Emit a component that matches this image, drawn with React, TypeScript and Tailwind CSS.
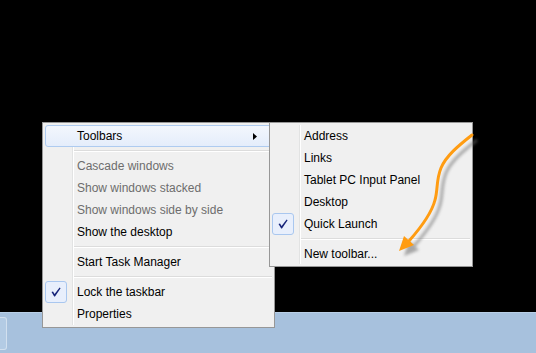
import type { ReactNode } from "react";

type Item =
  | { kind: "item"; label: string; disabled?: boolean; checked?: boolean; hot?: boolean; submenu?: boolean }
  | { kind: "sep" };

const mainItems: Item[] = [
  { kind: "item", label: "Toolbars", hot: true, submenu: true },
  { kind: "sep" },
  { kind: "item", label: "Cascade windows", disabled: true },
  { kind: "item", label: "Show windows stacked", disabled: true },
  { kind: "item", label: "Show windows side by side", disabled: true },
  { kind: "item", label: "Show the desktop" },
  { kind: "sep" },
  { kind: "item", label: "Start Task Manager" },
  { kind: "sep" },
  { kind: "item", label: "Lock the taskbar", checked: true },
  { kind: "item", label: "Properties" },
];

const toolbarItems: Item[] = [
  { kind: "item", label: "Address" },
  { kind: "item", label: "Links" },
  { kind: "item", label: "Tablet PC Input Panel" },
  { kind: "item", label: "Desktop" },
  { kind: "item", label: "Quick Launch", checked: true },
  { kind: "sep" },
  { kind: "item", label: "New toolbar..." },
];

function Check() {
  return (
    <div className="absolute left-0 top-0 flex h-[22px] w-[22px] items-center justify-center rounded-[3px] border border-[#a9c7ef] bg-[#e8effc]">
      <svg width="10" height="10" viewBox="0 0 10 10">
        <path d="M0.5 5 L2 4.5 L3.6 7 L8.6 0.6 L9.6 1.2 L4 9.4 L3.2 9.4 Z" fill="#16247a" />
      </svg>
    </div>
  );
}

function MenuRow({ item }: { item: Item }) {
  if (item.kind === "sep") {
    return (
      <div className="flex h-[8px] flex-col justify-center pl-[29px]">
        <div className="h-px bg-[#dcdcdc]" />
        <div className="h-px bg-white" />
      </div>
    );
  }
  return (
    <div
      className={`relative flex h-[22px] items-center pl-[32px] pr-[10px] ${
        item.hot ? "rounded-[3px] border border-[#aecbf0] bg-gradient-to-b from-[#f3f7fd] to-[#e4edfb]" : ""
      }`}
    >
      {item.checked && <Check />}
      <span className={`${item.hot ? "-ml-px" : ""} ${item.disabled ? "text-[#6d6d6d]" : "text-black"}`}>{item.label}</span>
      {item.submenu && (
        <svg className="ml-auto mr-[4px]" width="4" height="7" viewBox="0 0 4 7">
          <path d="M0 0 L4 3.5 L0 7 Z" fill="#000" />
        </svg>
      )}
    </div>
  );
}

function Menu({ items, className, children }: { items: Item[]; className: string; children?: ReactNode }) {
  return (
    <div className={`absolute border border-[#979797] bg-[#f0f0f0] p-[2px] ${className}`}>
      <div className="absolute bottom-[2px] left-[29px] top-[2px] flex">
        <div className="w-px bg-[#e2e3e3]" />
        <div className="w-px bg-white" />
      </div>
      <div className="relative flex flex-col">
        {items.map((it, i) => (
          <MenuRow key={i} item={it} />
        ))}
      </div>
      {children}
    </div>
  );
}

export default function App() {
  return (
    <div
      className="relative flex h-[353px] w-[536px] flex-col overflow-hidden bg-black text-[12px] leading-none"
      style={{ fontFamily: '"Segoe UI", "Liberation Sans", Arial, sans-serif' }}
    >
      <div className="mt-auto flex h-[41px] items-center border-t border-[#b9cfe6] bg-[#a7c1dd]">
        <div className="h-[33px] w-[7px] rounded-r-[3px] border border-l-0 border-[#d2e0ef] bg-[#b3cbe4]" />
      </div>

      <Menu items={mainItems} className="left-[42px] top-[122px] w-[233px]" />
      <Menu items={toolbarItems} className="left-[269px] top-[122px] w-[204px] pb-px" />

      <svg className="pointer-events-none absolute left-0 top-0" width="536" height="353" viewBox="0 0 536 353">
        <defs>
          <filter id="blur" x="-20%" y="-20%" width="140%" height="140%">
            <feGaussianBlur stdDeviation="1.6" />
          </filter>
        </defs>
        <g transform="translate(5 5)" filter="url(#blur)" opacity="0.55">
          <path
            d="M472 135 C458 146 446 156 441 168 C436 180 438 190 435 200 C432 212 424 224 409 241"
            stroke="#6b6b6b"
            strokeWidth="3"
            fill="none"
          />
          <path d="M399 251 L404 236 L414 245 Z" fill="#6b6b6b" />
        </g>
        <path
          d="M472 135 C458 146 446 156 441 168 C436 180 438 190 435 200 C432 212 424 224 409 241"
          stroke="#ff9c12"
          strokeWidth="3"
          strokeLinecap="round"
          fill="none"
        />
        <path d="M399 251 L404 236 L414 245 Z" fill="#ff9c12" />
      </svg>
    </div>
  );
}
